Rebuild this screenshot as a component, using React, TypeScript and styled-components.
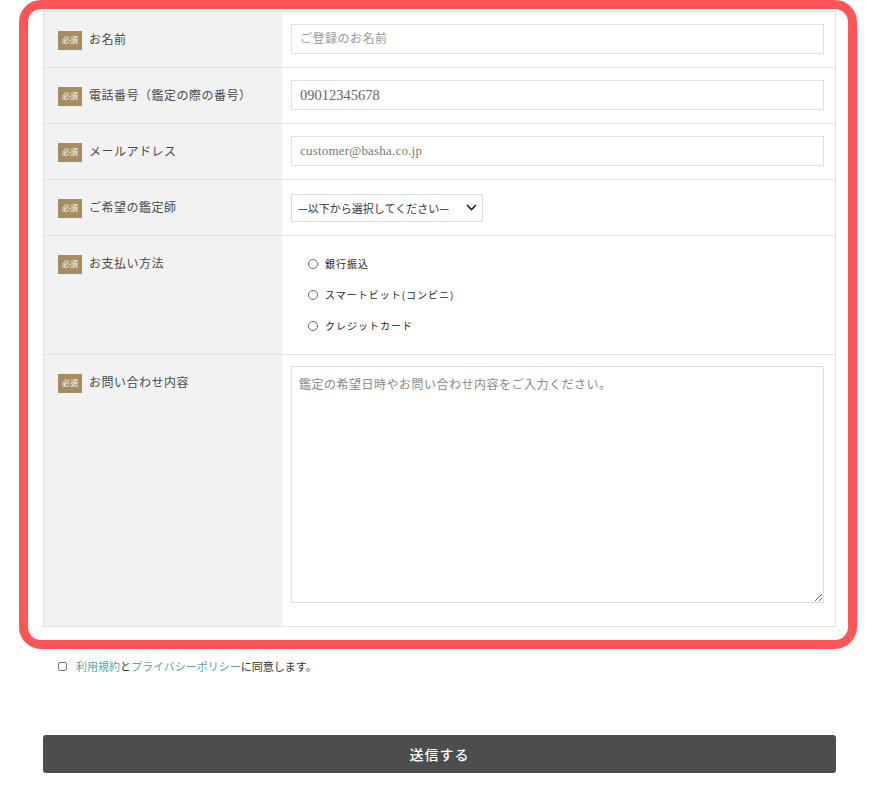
import React from "react";
import styled, { createGlobalStyle } from "styled-components";

const Global = createGlobalStyle`
  html, body { margin: 0; padding: 0; background: #fff; }
  body { font-family: "Liberation Serif", "Noto Sans CJK JP", serif; color: #444; }
  * { box-sizing: border-box; }
`;

const Page = styled.div`
  width: 879px;
  padding-bottom: 27px;
`;

const Highlight = styled.div`
  margin-left: 19px;
  width: 838px;
  border: 9px solid #fe5656;
  border-radius: 22px;
  padding: 2px 12px 13px 15px;
  background: #fff;
`;

const Table = styled.div`
  border: 1px solid #e2e2e2;
  display: grid;
  grid-template-columns: 238px 1fr;
`;

const LabelCell = styled.div<{ $last?: boolean }>`
  background: #f2f2f2;
  padding: 19px 10px 0 14px;
  border-bottom: ${(p) => (p.$last ? "none" : "1px solid #e2e2e2")};
  display: flex;
  align-items: flex-start;
  gap: 7px;
`;

const Badge = styled.span`
  flex: none;
  width: 24px;
  height: 19px;
  background: #a68c5f;
  color: #fff;
  font-size: 8px;
  line-height: 19px;
  text-align: center;
  letter-spacing: 0;
`;

const LabelText = styled.span`
  font-size: 12px;
  letter-spacing: 0.5px;
  line-height: 19px;
  color: #4a4a4a;
`;

const ValueCell = styled.div<{ $pad: string; $last?: boolean }>`
  background: #fff;
  padding: ${(p) => p.$pad};
  border-bottom: ${(p) => (p.$last ? "none" : "1px solid #e2e2e2")};
`;

const TextInput = styled.input<{ $size: number; $ph: string; $ls?: number }>`
  display: block;
  width: 100%;
  height: 30px;
  border: 1px solid #e1e1e1;
  padding: 0 8px;
  font-family: "Liberation Serif", "Noto Sans CJK JP", serif;
  font-size: ${(p) => p.$size}px;
  letter-spacing: ${(p) => p.$ls ?? 0}px;
  outline: none;
  &::placeholder { color: ${(p) => p.$ph}; }
`;

const SelectWrap = styled.div`
  position: relative;
  width: 192px;
  height: 28px;
`;

const Select = styled.select`
  appearance: none;
  display: block;
  width: 100%;
  height: 100%;
  border: 1px solid #dcdcdc;
  border-radius: 0;
  background: #fff;
  padding: 0 24px 0 6px;
  font-family: "Noto Sans CJK JP", "Liberation Sans", sans-serif;
  font-size: 11px;
  color: #333;
  outline: none;
`;

const Chevron = styled.svg`
  position: absolute;
  right: 6px;
  top: 10px;
  pointer-events: none;
`;

const RadioList = styled.div`
  padding: 12px 0 13px 26px;
  display: flex;
  flex-direction: column;
`;

const RadioRow = styled.label`
  display: flex;
  align-items: center;
  gap: 7px;
  height: 31px;
  font-family: "Noto Sans CJK JP", "Liberation Sans", sans-serif;
  font-size: 10px;
  letter-spacing: 1px;
  font-weight: 400;
  color: #1e1e1e;
`;

const Radio = styled.input`
  appearance: none;
  margin: 0;
  width: 10px;
  height: 10px;
  border: 1px solid #666;
  border-radius: 50%;
  background: #fff;
`;

const TextArea = styled.textarea`
  display: block;
  width: 100%;
  height: 237px;
  border: 1px solid #dedede;
  padding: 8px 7px;
  font-family: "Liberation Serif", "Noto Sans CJK JP", serif;
  font-size: 12px;
  letter-spacing: 0.5px;
  outline: none;
  &::placeholder { color: #888; }
`;

const Agree = styled.label`
  display: flex;
  align-items: center;
  gap: 9px;
  margin: 9px 0 0 58px;
  height: 16px;
  font-size: 11px;
  color: #333;
  font-family: "Noto Sans CJK JP", "Liberation Sans", sans-serif;
`;

const Check = styled.input`
  appearance: none;
  margin: 0;
  width: 9px;
  height: 9px;
  border: 1px solid #777;
  border-radius: 2px;
`;

const Link = styled.a`
  color: #5aa5aa;
  text-decoration: none;
`;

const Submit = styled.button`
  display: block;
  margin: 61px 0 0 43px;
  width: 793px;
  height: 38px;
  border: none;
  border-radius: 3px;
  background: #4d4d4d;
  color: #fff;
  font-family: "Noto Sans CJK JP", "Liberation Sans", sans-serif;
  font-size: 14px;
  font-weight: 500;
  letter-spacing: 1px;
`;

const Label = ({ text, last }: { text: string; last?: boolean }) => (
  <LabelCell $last={last}>
    <Badge>必須</Badge>
    <LabelText>{text}</LabelText>
  </LabelCell>
);

export default function App() {
  return (
    <Page>
      <Global />
      <Highlight>
        <Table>
          <Label text="お名前" />
          <ValueCell $pad="12px 11px 13px 9px">
            <TextInput $size={12} $ls={0.5} $ph="#999" placeholder="ご登録のお名前" />
          </ValueCell>

          <Label text="電話番号（鑑定の際の番号）" />
          <ValueCell $pad="12px 11px 13px 9px">
            <TextInput $size={14.5} $ph="#666" placeholder="09012345678" />
          </ValueCell>

          <Label text="メールアドレス" />
          <ValueCell $pad="12px 11px 13px 9px">
            <TextInput $size={13} $ls={0.2} $ph="#777" placeholder="customer@basha.co.jp" />
          </ValueCell>

          <Label text="ご希望の鑑定師" />
          <ValueCell $pad="14px 11px 13px 9px">
            <SelectWrap>
              <Select defaultValue="">
                <option value="">—以下から選択してください—</option>
              </Select>
              <Chevron width="11" height="7" viewBox="0 0 11 7">
                <path d="M1 1l4.5 4.5L10 1" fill="none" stroke="#222" strokeWidth="1.6" />
              </Chevron>
            </SelectWrap>
          </ValueCell>

          <Label text="お支払い方法" />
          <ValueCell $pad="0">
            <RadioList>
              <RadioRow><Radio type="radio" name="pay" />銀行振込</RadioRow>
              <RadioRow><Radio type="radio" name="pay" />スマートビット(コンビニ)</RadioRow>
              <RadioRow><Radio type="radio" name="pay" />クレジットカード</RadioRow>
            </RadioList>
          </ValueCell>

          <Label text="お問い合わせ内容" last />
          <ValueCell $pad="11px 11px 23px 9px" $last>
            <TextArea placeholder="鑑定の希望日時やお問い合わせ内容をご入力ください。" />
          </ValueCell>
        </Table>
      </Highlight>

      <Agree>
        <Check type="checkbox" />
        <span>
          <Link href="#">利用規約</Link>と<Link href="#">プライバシーポリシー</Link>に同意します。
        </span>
      </Agree>

      <Submit type="button">送信する</Submit>
    </Page>
  );
}
